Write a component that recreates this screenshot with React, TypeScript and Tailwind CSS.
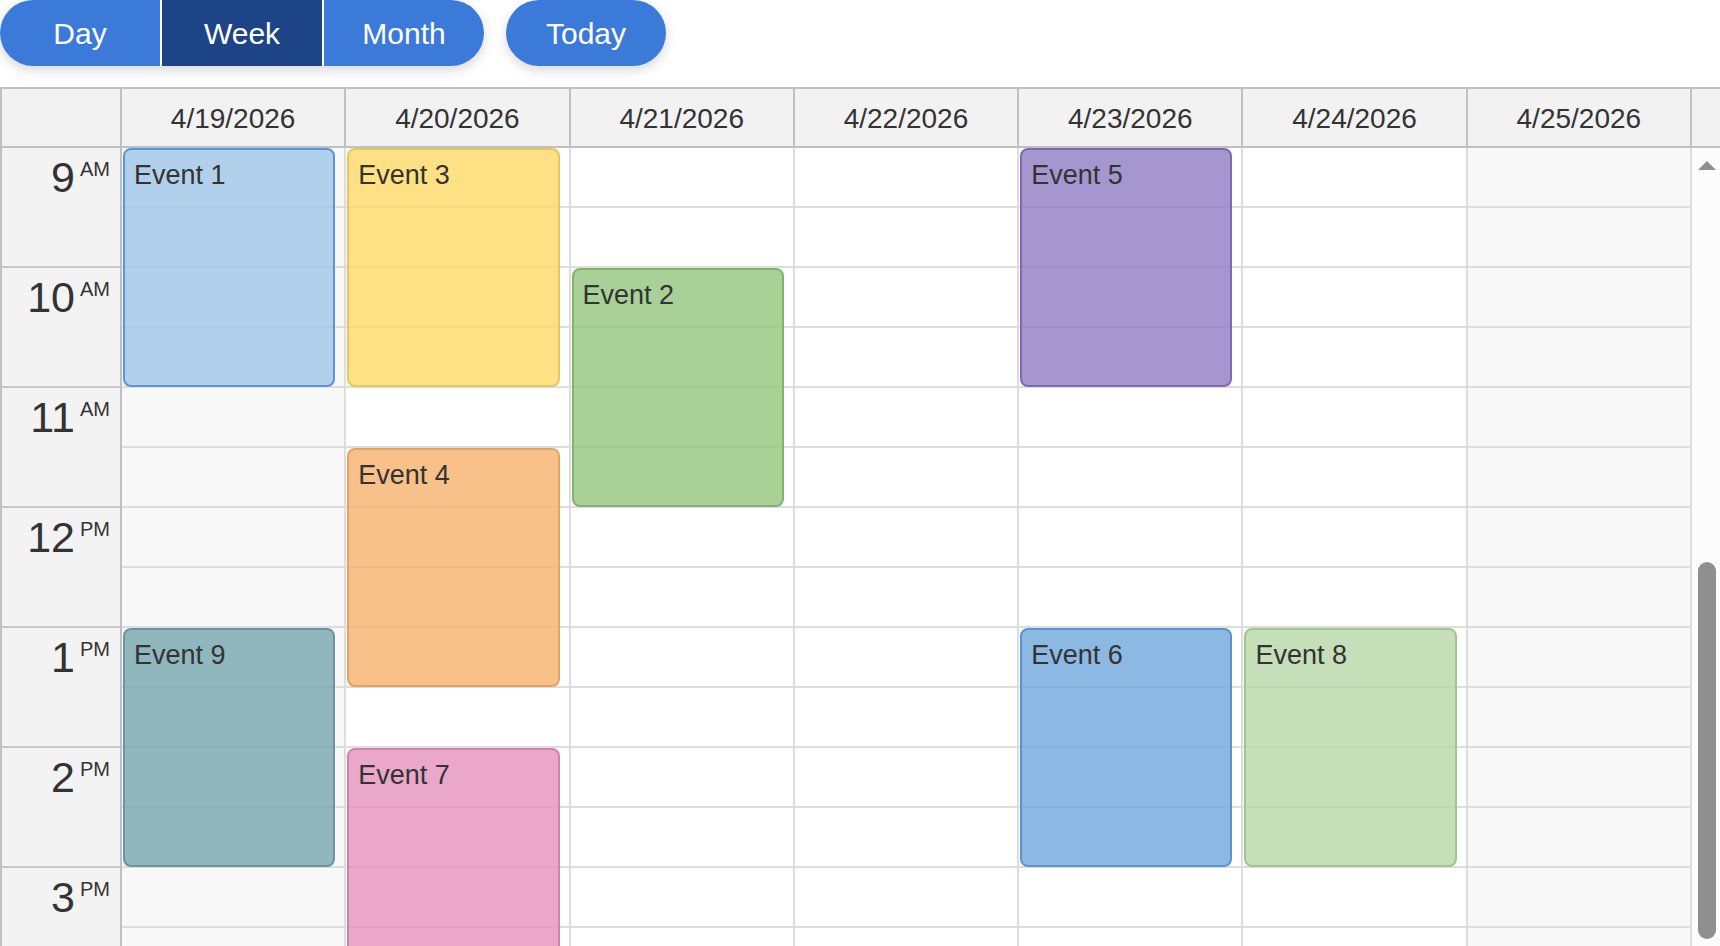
import React from "react";

type Ev = { title: string; col: number; start: number; dur: number; bg: string; border: string };

const events: Ev[] = [
  { title: "Event 1", col: 0, start: 9, dur: 2, bg: "bg-[#9fc5e8]/80", border: "border-[#5b93dd]" },
  { title: "Event 9", col: 0, start: 13, dur: 2, bg: "bg-[#76a5af]/80", border: "border-[#6c959e]" },
  { title: "Event 3", col: 1, start: 9, dur: 2, bg: "bg-[#ffd966]/80", border: "border-[#e8c462]" },
  { title: "Event 4", col: 1, start: 11.5, dur: 2, bg: "bg-[#f6b26b]/80", border: "border-[#e3a463]" },
  { title: "Event 7", col: 1, start: 14, dur: 2, bg: "bg-[#e691bb]/80", border: "border-[#d083a9]" },
  { title: "Event 2", col: 2, start: 10, dur: 2, bg: "bg-[#93c47d]/80", border: "border-[#83b26e]" },
  { title: "Event 5", col: 4, start: 9, dur: 2, bg: "bg-[#8e7cc3]/80", border: "border-[#7d6bb2]" },
  { title: "Event 6", col: 4, start: 13, dur: 2, bg: "bg-[#6fa8dc]/80", border: "border-[#5a93cf]" },
  { title: "Event 8", col: 5, start: 13, dur: 2, bg: "bg-[#b6d7a8]/80", border: "border-[#a2c495]" },
];

const dates = ["4/19/2026", "4/20/2026", "4/21/2026", "4/22/2026", "4/23/2026", "4/24/2026", "4/25/2026"];
const hours = [
  { h: "9", p: "AM" },
  { h: "10", p: "AM" },
  { h: "11", p: "AM" },
  { h: "12", p: "PM" },
  { h: "1", p: "PM" },
  { h: "2", p: "PM" },
  { h: "3", p: "PM" },
];

export default function App() {
  return (
    <div className="w-[1720px] h-[946px] overflow-hidden bg-white text-[#333] font-['Liberation_Sans',Arial,sans-serif] flex flex-col">
      {/* toolbar */}
      <div className="flex h-[66px] shrink-0 gap-[22px]">
        <div className="flex gap-[2px] bg-white rounded-full overflow-hidden shadow-[0_4px_12px_rgba(0,0,0,0.16)]">
          <button className="w-[160px] bg-[#3c7ad9] text-white text-[30px] leading-none pt-[2px]">Day</button>
          <button className="w-[160px] bg-[#1e4488] text-white text-[30px] leading-none pt-[2px]">Week</button>
          <button className="w-[160px] bg-[#3c7ad9] text-white text-[30px] leading-none pt-[2px]">Month</button>
        </div>
        <button className="w-[160px] rounded-full bg-[#3c7ad9] text-white text-[30px] leading-none pt-[2px] shadow-[0_4px_12px_rgba(0,0,0,0.16)]">
          Today
        </button>
      </div>

      {/* calendar */}
      <div className="mt-[21px] flex-1 flex flex-col border-t-2 border-l-2 border-[#c0c0c0] min-h-0">
        {/* header */}
        <div className="flex h-[59px] shrink-0 border-b-2 border-[#c0c0c0] bg-[#f2f2f2]">
          <div className="w-[120px] shrink-0 border-r-2 border-[#c0c0c0]" />
          {dates.map((d) => (
            <div
              key={d}
              className="flex-1 basis-0 border-r-2 border-[#c0c0c0] flex items-center justify-center pt-[2px] text-[28px] leading-none"
            >
              {d}
            </div>
          ))}
          <div className="w-[28px] shrink-0" />
        </div>

        {/* body */}
        <div className="flex flex-1 min-h-0 overflow-hidden">
          <div className="w-[120px] shrink-0 border-r-2 border-[#c0c0c0] bg-[#f3f3f3] flex flex-col">
            {hours.map((t) => (
              <div
                key={t.h + t.p}
                className="h-[120px] shrink-0 border-b-2 border-[#c6c6c6] flex justify-end items-start pr-[10px] pt-[8px]"
              >
                <span className="text-[43px] leading-none">{t.h}</span>
                <span className="text-[20px] leading-none ml-[5px] mt-[3px]">{t.p}</span>
              </div>
            ))}
          </div>
          {dates.map((d, ci) => (
            <div
              key={d}
              className={`relative flex-1 basis-0 border-r-2 border-[#dddddd] flex flex-col ${
                ci === 0 || ci === 6 ? "bg-[#f8f8f8]" : "bg-white"
              }`}
            >
              {Array.from({ length: 14 }).map((_, i) => (
                <div key={i} className="h-[60px] shrink-0 border-b-2 border-[#dddddd]" />
              ))}
              {events
                .filter((e) => e.col === ci)
                .map((e) => (
                  <div
                    key={e.title}
                    className={`absolute left-px right-[9px] rounded-[8px] border-2 ${e.bg} ${e.border} pl-[9px] pt-[12px] text-[27px] leading-none text-[#333]`}
                    style={{ top: (e.start - 9) * 120, height: e.dur * 120 - 1 }}
                  >
                    {e.title}
                  </div>
                ))}
            </div>
          ))}
          {/* scrollbar */}
          <div className="w-[28px] shrink-0 bg-[#fcfcfc] flex flex-col items-center">
            <svg width="18" height="9" viewBox="0 0 18 9" className="mt-[13px] ml-[2px]">
              <polygon points="9,0 18,9 0,9" fill="#8f8f8f" />
            </svg>
            <div className="mt-[392px] ml-[2px] w-[18px] h-[377px] rounded-full bg-[#8f8f8f]" />
          </div>
        </div>
      </div>
    </div>
  );
}
